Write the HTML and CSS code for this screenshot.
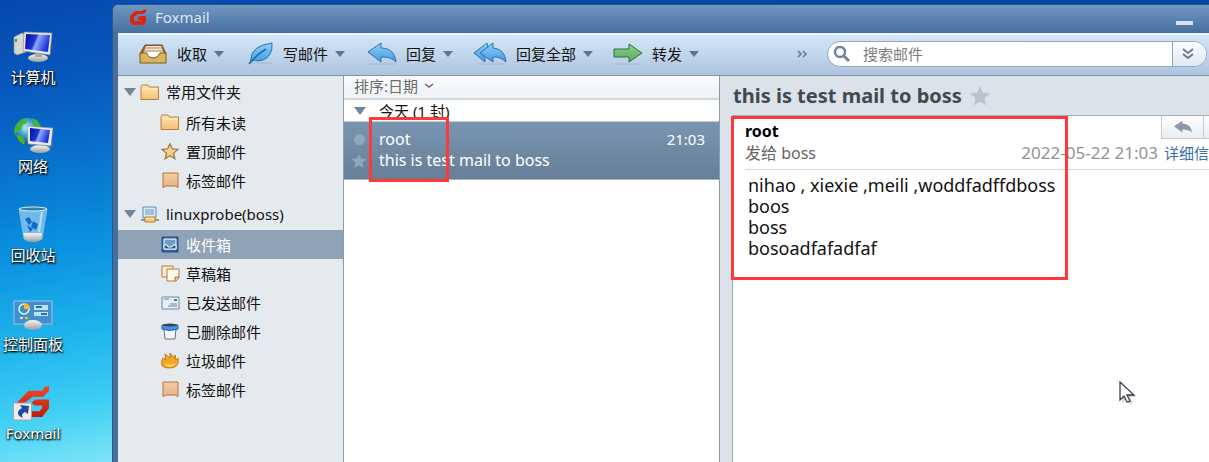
FILE: index.html
```html
<!DOCTYPE html>
<html lang="zh-CN">
<head>
<meta charset="utf-8">
<title>Foxmail</title>
<link rel="stylesheet" href="styles.css">
</head>
<body>
<svg class="defs" aria-hidden="true">
  <defs>
    <linearGradient id="screen" x1="0" y1="0" x2="1" y2="0.3"><stop offset="0" stop-color="#0410a0"/><stop offset=".45" stop-color="#1b35d0"/><stop offset=".55" stop-color="#8fa8ff"/><stop offset="1" stop-color="#1a34d8"/></linearGradient>
    <linearGradient id="metal" x1="0" y1="0" x2="0" y2="1"><stop offset="0" stop-color="#f6f6f6"/><stop offset="1" stop-color="#9c9c9c"/></linearGradient>
    <linearGradient id="red" x1="0" y1="0" x2="0" y2="1"><stop offset="0" stop-color="#f04a2c"/><stop offset="1" stop-color="#c41808"/></linearGradient>
    <linearGradient id="blue" x1="0" y1="0" x2="0" y2="1"><stop offset="0" stop-color="#8fd2f8"/><stop offset="1" stop-color="#3f9be4"/></linearGradient>
    <linearGradient id="green" x1="0" y1="0" x2="0" y2="1"><stop offset="0" stop-color="#8fd08c"/><stop offset="1" stop-color="#55ab58"/></linearGradient>
    <linearGradient id="gold" x1="0" y1="0" x2="0" y2="1"><stop offset="0" stop-color="#ffe3b0"/><stop offset="1" stop-color="#f5c070"/></linearGradient>
    <linearGradient id="tan" x1="0" y1="0" x2="0" y2="1"><stop offset="0" stop-color="#f3cfa4"/><stop offset="1" stop-color="#e6b284"/></linearGradient>
    <radialGradient id="globe" cx=".45" cy=".35"><stop offset="0" stop-color="#c8f4ff"/><stop offset=".5" stop-color="#48a8d8"/><stop offset="1" stop-color="#1560a8"/></radialGradient>
    <symbol id="fox" viewBox="0 0 36 34"><path d="M35 1v5l-6 6H18l-9 7v8h16l3-3v-3h-8l-3-3 4-3h14v9l-7 9H8l-6-5V18L14 6h14l2-4z" fill="url(#red)"/></symbol>
    <symbol id="fox-small" viewBox="0 0 18 17"><path d="M17 0v3l-3 2H9L5 8v4h7v-1H9V8l2-1h6v6l-3 3H4l-3-3V7l5-5h7l1-1z" fill="#dc2410"/></symbol>
    <symbol id="folder" viewBox="0 0 20 17"><path d="M1 15.500V2.500L2 1h6l1.500 2H18.500v12.500z" fill="url(#gold)" stroke="#b5803c"/><path d="M2 5h16" stroke="#fff0cf"/></symbol>
    <symbol id="tag" viewBox="0 0 20 17"><path d="M3 1h15v14.500l-3-1.500h-9l-3 1.500z" fill="url(#tan)" stroke="#b8733f"/></symbol>
    <symbol id="star" viewBox="0 0 20 20"><path d="M10 1l2.700 6 6.500.600-5 4.300 1.500 6.600-5.700-3.500-5.700 3.500 1.500-6.600-5-4.300 6.500-.600z"/></symbol>
    <symbol id="reply" viewBox="0 0 30 22"><path d="M1 10L14 1v5c8 0 14 4 15 14-4-4-8-5-15-5v5z"/></symbol>
  </defs>
</svg>
<div class="desktop">
  <nav class="shortcuts">
    <a class="shortcut" href="#computer">
      <svg viewBox="0 0 40 40"><path d="M1 10l8-4 4 2v17l-9 3-3-2z" fill="#d8d8d2" stroke="#8b8f92" stroke-width=".7"/><path d="M3 12v3" stroke="#2fae30" stroke-width="2"/><ellipse cx="25" cy="31" rx="10" ry="4" fill="url(#metal)"/><path d="M22 24h7v6h-7z" fill="#aaa"/><path d="M11 5l28 1-2 22-27-4z" fill="#e8e8e4" stroke="#85898e" stroke-width=".7"/><path d="M13 7l24 1-2 17-23-3z" fill="url(#screen)"/></svg>
      <span>计算机</span>
    </a>
    <a class="shortcut" href="#network">
      <svg viewBox="0 0 40 40"><circle cx="15" cy="16" r="14" fill="url(#globe)"/><path d="M3 9l6-6 6-1-2 5-4 2-1 5-5 3-1 3-1-6zM18 2l6 2 4 6-4 3-4-4 1-3zM3 19l6 1 3 5-1 4-5-4z" fill="#43b52e"/><ellipse cx="27" cy="33" rx="10" ry="4" fill="url(#metal)"/><path d="M14 10l26 2-2 18-23-2z" fill="#e8e8e4" stroke="#85898e" stroke-width=".7"/><path d="M17 12l20 2-2 13-18-2z" fill="url(#screen)"/></svg>
      <span>网络</span>
    </a>
    <a class="shortcut" href="#recycle">
      <svg viewBox="0 0 40 40"><path d="M6 4h28l-5 30q-9 5-18 0z" fill="#a5d9f2" fill-opacity=".65" stroke="#7db5d8"/><ellipse cx="20" cy="4" rx="14" ry="2" fill="#347fae" stroke="#d6eff8"/><path d="M10 28l19 0-1 7q-8 4-16 0z" fill="url(#metal)"/><path d="M12 14l4-2 3 5-3 3zM20 16l5 3-2 6-5-3zM14 20l6 4-3 3z" fill="#1666c8"/><path d="M29 7l-3 20" stroke="#e8f8ff" stroke-width="2" opacity=".6"/></svg>
      <span>回收站</span>
    </a>
    <a class="shortcut" href="#control">
      <svg viewBox="0 0 40 40"><path d="M1 7h38v23H1z" fill="#428fcb" stroke="#91cbed"/><circle cx="11" cy="15" r="5" fill="none" stroke="#eef8ff" stroke-width="1.500"/><path d="M11 15V9a6 6 0 0 1 6 6z" fill="#ffb52c"/><path d="M21 11h14v5H21zM21 18h14v4H21z" fill="#bfe2f8"/><path d="M23 13h6M28 20h6" stroke="#1577bd" stroke-width="2"/><path d="M7 24h3" stroke="#aef" stroke-width="2"/><path d="M12 24h3" stroke="#ffb52c" stroke-width="2"/><ellipse cx="20" cy="31" rx="9" ry="5" fill="url(#metal)"/></svg>
      <span>控制面板</span>
    </a>
    <a class="shortcut" href="#foxmail">
      <svg viewBox="0 0 40 40"><use href="#fox" x="2" y="2" width="35" height="33"/><path d="M.5 20h18v17H.5z" fill="#f3e9ec" stroke="#a9a4a8"/><path d="M7 22l9 1-1 8-3-2c-4 2-3 4-2 6-6-2-7-7-1-10z" fill="#184f9c"/></svg>
      <span>Foxmail</span>
    </a>
  </nav>

  <main class="window">
    <header class="titlebar">
      <svg class="logo"><use href="#fox-small"/></svg>
      <h1>Foxmail</h1>
      <button class="minimize" aria-label="最小化"></button>
    </header>

    <div class="client">
      <div class="toolbar">
        <button class="tool">
          <svg viewBox="0 0 30 24"><path d="M7 3h17l4 9H2z" fill="#9c6a34" stroke="#6f4a20"/><path d="M8 4h15l3 8H5z" fill="#efe4d6"/><path d="M7 6h17M6 9h19" stroke="#a98968"/><path d="M2 11h7q1 5 6 5t7-5h6v10H2z" fill="#d8b75c" stroke="#7d5a1d"/><path d="M9 10h13q-2 5-7 5t-6-5z" fill="#fff"/></svg>
          <span>收取</span><i class="caret"></i>
        </button>
        <button class="tool">
          <svg viewBox="0 0 30 24"><path d="M8 21h20" stroke="#8da6c0" opacity=".5"/><path d="M7 17Q7 4 28 1q1 13-9 17-5 2-9 0l-4 3z" fill="url(#blue)" stroke="#2b6fb5"/><path d="M5 22Q12 13 22 7" fill="none" stroke="#2568ac" stroke-width="1.500"/></svg>
          <span>写邮件</span><i class="caret"></i>
        </button>
        <button class="tool spaced">
          <svg viewBox="0 0 30 24"><path d="M1 22h28" stroke="#8da6c0" opacity=".5"/><use href="#reply" width="30" height="22" fill="url(#blue)" stroke="#2e6cb0"/></svg>
          <span>回复</span><i class="caret"></i>
        </button>
        <button class="tool">
          <svg class="wide" viewBox="0 0 34 24"><path d="M4 22h28" stroke="#8da6c0" opacity=".5"/><path d="M14 1L1 11l11 9v-4l-4-5 7-6z" fill="url(#blue)" stroke="#2e6cb0"/><path d="M7 11L20 1v5c8 1 12 5 13 14-4-4-8-5-13-5v5z" fill="url(#blue)" stroke="#2e6cb0"/></svg>
          <span>回复全部</span><i class="caret"></i>
        </button>
        <button class="tool">
          <svg viewBox="0 0 30 24"><path d="M2 22h26" stroke="#8da6c0" opacity=".5"/><path d="M1 7h15V2l13 9-13 9v-5H1z" fill="url(#green)" stroke="#2f6e38"/></svg>
          <span>转发</span><i class="caret"></i>
        </button>
        <button class="overflow" aria-label="更多"><svg viewBox="0 0 10 8"><path d="M1 1l3 3-3 3M6 1l3 3-3 3" fill="none" stroke="#65758a" stroke-width="1.500"/></svg></button>
        <form class="search">
          <svg viewBox="0 0 18 16"><circle cx="7" cy="6" r="5" fill="none" stroke="#728595" stroke-width="2.500"/><path d="M11 10l5 5" stroke="#728595" stroke-width="3"/></svg>
          <input type="text" aria-label="搜索邮件" placeholder="搜索邮件">
          <button type="button" aria-label="搜索选项"><svg viewBox="0 0 12 12"><path d="M1 1l5 4 5-4M1 6l5 4 5-4" fill="none" stroke="#68798a" stroke-width="1.800"/></svg></button>
        </form>
      </div>

      <div class="panes">
        <nav class="folders">
          <section>
            <a class="group" href="#common"><i class="caret"></i><svg><use href="#folder"/></svg>常用文件夹</a>
            <a class="folder" href="#unread"><svg><use href="#folder"/></svg>所有未读</a>
            <a class="folder" href="#pinned"><svg><use href="#star" fill="url(#gold)" stroke="#a47639" stroke-width="1.500"/></svg>置顶邮件</a>
            <a class="folder" href="#tagged"><svg><use href="#tag"/></svg>标签邮件</a>
          </section>
          <section>
            <a class="group" href="#account"><i class="caret"></i><svg viewBox="0 0 20 17"><path d="M3 1h13v11H3z" fill="#d7ebfa" stroke="#5d8bb5"/><path d="M5 4h9M5 6h9M5 8h9" stroke="#6a94ba"/><path d="M1 14h18" stroke="#6f7b88" stroke-width="1.500"/><path d="M5 11h10v5H5z" fill="url(#gold)" stroke="#bb7d2d"/></svg>linuxprobe(boss)</a>
            <a class="folder selected" href="#inbox"><svg viewBox="0 0 20 17"><path d="M2 1h16v15H2z" fill="#2e5f9a" stroke="#285389"/><path d="M4 3h12v10H4z" fill="#6c9dcd" stroke="#fff"/><path d="M4 9h3l1 2h4l1-2h3v4H4z" fill="#28578f" stroke="#fff"/></svg>收件箱</a>
            <a class="folder" href="#drafts"><svg viewBox="0 0 20 17"><path d="M2 1h11v11H2z" fill="#ffe9cb" stroke="#b37a3f"/><path d="M7 4h12v9l-3 3H7z" fill="#fff8ea" stroke="#b37a3f"/><path d="M19 12h-4v4" fill="#e7b77c" stroke="#b37a3f"/></svg>草稿箱</a>
            <a class="folder" href="#sent"><svg viewBox="0 0 20 17"><path d="M2 3h17v12H2z" fill="#e6eefa" stroke="#72879f"/><path d="M4 5h5M10 10h7M8 12h9" stroke="#6381ad"/><path d="M14 6h3" stroke="#369157" stroke-width="2"/></svg>已发送邮件</a>
            <a class="folder" href="#deleted"><svg viewBox="0 0 20 17"><path d="M4 6h12l-1 10H5z" fill="#f4f5f5" stroke="#657182"/><path d="M2 2v4q8 3 16 0V2z" fill="#4d8de2" stroke="#2b61b6"/><ellipse cx="10" cy="2" rx="7" ry="1.500" fill="#31455f"/></svg>已删除邮件</a>
            <a class="folder" href="#junk"><svg viewBox="0 0 20 17"><path d="M3 6l3 2-1-6 5 4V1l4 5 1-3 1 5 2-2q2 10-9 10T3 6z" fill="#f5a72b" stroke="#c9741b"/><path d="M5 11q5 3 10 0-1 4-5 4t-5-4z" fill="#ffd658"/></svg>垃圾邮件</a>
            <a class="folder" href="#tags"><svg><use href="#tag"/></svg>标签邮件</a>
          </section>
        </nav>

        <section class="mails">
          <button class="sort">排序:日期 <svg viewBox="0 0 10 6"><path d="M1 1l4 3 4-3" fill="none" stroke="#626a72" stroke-width="1.500"/></svg></button>
          <h2 class="day"><i class="caret"></i>今天 (1 封)</h2>
          <article class="mail">
            <div class="marks"><i class="dot"></i><svg><use href="#star"/></svg></div>
            <div class="summary">
              <div class="line"><span>root</span><time>21:03</time></div>
              <div class="line">this is test mail to boss</div>
            </div>
            <div class="mark-sender"></div>
          </article>
        </section>

        <section class="reader">
          <h2 class="subject">this is test mail to boss <svg><use href="#star"/></svg></h2>
          <article class="message">
            <header class="meta">
              <strong>root</strong>
              <div class="line"><span>发给 boss</span><time>2022-05-22 21:03</time><a href="#details">详细信</a></div>
            </header>
            <div class="text">nihao , xiexie ,meili ,woddfadffdboss<br>boos<br>boss<br>bosoadfafadfaf</div>
            <div class="actions">
              <button aria-label="回复"><svg><use href="#reply"/></svg></button>
              <button aria-label="回复全部"></button>
            </div>
            <div class="mark-message"></div>
          </article>
        </section>
      </div>
    </div>
  </main>
  <svg class="pointer" viewBox="0 0 20 24"><path d="M4 3v19l4-4 3 5 4-1-3-6h6z" fill="#555" opacity=".25"/><path d="M2 1v18l4-4 3 6 3-1-3-6h7z" fill="#fff" stroke="#3d3d49" stroke-width="1.300"/></svg>
</div>
</body>
</html>
```

FILE: styles.css
```css
* { box-sizing: border-box; }
body {
  margin: 0;
  font: 15px/20px "Noto Sans", "Noto Sans CJK SC", sans-serif;
  color: #111;
}
a { color: inherit; text-decoration: none; }
button { border: 0; padding: 0; background: none; font: inherit; color: inherit; }
h1, h2 { margin: 0; font: inherit; }
svg { flex: none; display: block; }
.defs { position: absolute; width: 0; height: 0; }

.desktop {
  position: relative;
  display: flex;
  min-height: 100vh;
  overflow: hidden;
  background:
    linear-gradient(170deg, #0649ad 0, #0757bd 18%, #0873cd 36%, #0b93e0 54%, #20b5ed 72%, #3dcef3 86%, #83e6f8 100%) 0 0 / 140px 100% no-repeat,
    linear-gradient(90deg, #064bb0 140px, #00489c);
}
.shortcuts {
  flex: none;
  width: 112px;
  padding: 27px 46px 0 0;
  display: flex;
  flex-direction: column;
  gap: 29px;
}
.shortcut {
  display: flex;
  flex-direction: column;
  align-items: center;
  color: #fff;
  white-space: nowrap;
  text-shadow: 1px 1px 2px #000, 0 1px 2px #000;
}
.shortcut svg { width: 40px; height: 40px; }

.window {
  flex: 1;
  min-width: 0;
  margin-top: 4px;
  display: flex;
  flex-direction: column;
  border: solid #31557f;
  border-width: 1px 0 0 1px;
  border-radius: 6px 0 0 0;
  background: #466f9f;
}
.titlebar {
  display: flex;
  align-items: center;
  height: 28px;
  padding: 0 16px 4px;
  gap: 8px;
  border-radius: 5px 0 0 0;
  background: linear-gradient(#6e97c4, #466f9d);
  color: #dbe7f4;
}
.logo { width: 18px; height: 17px; }
.minimize {
  width: 17px;
  height: 4px;
  margin: 12px 0 0 auto;
  background: #d4e0ee;
}
.client {
  flex: 1;
  display: flex;
  flex-direction: column;
  margin-left: 5px;
}
.toolbar {
  display: flex;
  align-items: center;
  gap: 20px;
  height: 43px;
  padding: 0 2px 2px 20px;
  border-top: 2px solid #e9f4fd;
  border-bottom: 1px solid #8195ae;
  background: linear-gradient(#d4e7f8, #aec3de);
}
.tool { display: flex; align-items: center; white-space: nowrap; }
.tool svg { width: 30px; height: 24px; margin-right: 9px; }
.tool .wide { width: 34px; }
.tool .caret { margin-left: 7px; }
.spaced { margin-left: 2px; }
.caret {
  flex: none;
  border: solid transparent;
  border-width: 6px 5px 0;
  border-top-color: #60758c;
}
.overflow { margin-left: auto; }
.overflow svg { width: 10px; height: 8px; }
.search {
  flex: 0 1 380px;
  display: flex;
  align-items: center;
  height: 26px;
  overflow: hidden;
  border: 1px solid #91a8bf;
  border-radius: 13px;
  background: #fff;
}
.search > svg { width: 18px; height: 16px; margin-left: 5px; }
.search input {
  flex: 1;
  min-width: 0;
  padding: 0 12px;
  border: 0;
  outline: 0;
  background: none;
  font: inherit;
}
.search input::placeholder { color: #7d7d7d; opacity: 1; }
.search button {
  display: flex;
  align-items: center;
  justify-content: center;
  align-self: stretch;
  width: 34px;
  padding-right: 4px;
  border-left: 1px solid #91a8bf;
  background: linear-gradient(#fafcff, #dfe9f5);
}
.search button svg { width: 12px; height: 12px; }

.panes {
  flex: 1;
  display: grid;
  grid-template-columns: 226px 376px minmax(0, 1fr);
}
.folders {
  display: flex;
  flex-direction: column;
  gap: 3px;
  border-right: 1px solid #8c9bad;
  background: #e5eaee;
}
.group, .folder { display: flex; align-items: center; gap: 6px; }
.group { height: 32px; padding-left: 6px; }
.folder { height: 29px; padding-left: 42px; }
.group svg, .folder svg { width: 20px; height: 17px; }
.folders .caret, .day .caret { border-width: 8px 6px 0; border-top-color: #71869a; }
.group svg { margin-left: -2px; }
.selected { background: #90a3b6; color: #fff; }

.mails { border-right: 1px solid #8c9bad; background: #fff; }
.sort {
  display: flex;
  align-items: center;
  gap: 6px;
  width: 100%;
  height: 24px;
  padding: 0 0 2px 10px;
  border-bottom: 2px solid #d2d7dc;
  background: linear-gradient(#fafbfc, #eff3f6);
  color: #6b6b6b;
}
.sort svg { width: 10px; height: 6px; }
.day {
  display: flex;
  align-items: center;
  gap: 13px;
  height: 22px;
  padding-left: 10px;
  border-bottom: 1px solid #c5ccd3;
}
.mail {
  position: relative;
  display: flex;
  height: 58px;
  padding: 7px 14px 0 7px;
  gap: 12px;
  border-bottom: 1px solid #a5b3c2;
  background: linear-gradient(#7995b1, #677f97);
  color: #fff;
}
.marks {
  display: flex;
  flex-direction: column;
  align-items: center;
  gap: 8px;
  padding-top: 5px;
}
.dot { width: 11px; height: 11px; border-radius: 50%; background: #91a7c0; }
.marks svg { width: 16px; height: 16px; fill: #91a7c0; }
.summary { flex: 1; font-size: 16px; }
.summary time { font-size: 15px; }
.line { display: flex; white-space: nowrap; line-height: 21px; }
.line time { margin-left: auto; }
.mark-sender, .mark-message { position: absolute; border: 3px solid #ff3838; }
.mark-sender { left: 25px; top: -5px; width: 80px; height: 65px; }

.reader {
  display: flex;
  flex-direction: column;
  padding-left: 12px;
  background: #dbe2e9;
}
.subject {
  display: flex;
  align-items: center;
  gap: 7px;
  height: 39px;
  padding-left: 1px;
  font-size: 20px;
  font-weight: 700;
  color: #424950;
}
.subject svg { width: 22px; height: 22px; fill: #bcc3ce; }
.message {
  position: relative;
  flex: 1;
  border: solid #a3adb6;
  border-width: 1px 0 0 1px;
  background: #fff;
}
.meta {
  margin-left: 12px;
  padding: 4px 0 5px;
  border-bottom: 1px solid #d5d5d5;
  color: #666;
}
.meta strong { display: block; font-size: 16px; line-height: 22px; color: #000; }
.meta .line { line-height: 22px; font-size: 16px; }
.meta time { font-size: 17px; color: #939393; }
.meta a { margin-left: 6px; font-size: 15px; color: #3870b0; }
.text { padding: 5px 15px; font-size: 18px; line-height: 21px; }
.actions { position: absolute; top: 0; right: 0; display: flex; }
.actions button {
  display: flex;
  align-items: center;
  justify-content: center;
  width: 42px;
  height: 23px;
  border: solid #c6ccd1;
  border-width: 0 0 1px 1px;
  background: linear-gradient(#fff, #e9eef2);
}
.actions button + button { width: 6px; }
.actions svg { width: 20px; height: 14px; fill: #8b9aaa; }
.mark-message { left: -2px; top: 0; width: 337px; height: 164px; }
.pointer { position: absolute; left: 1118px; top: 381px; width: 20px; height: 24px; }
```
